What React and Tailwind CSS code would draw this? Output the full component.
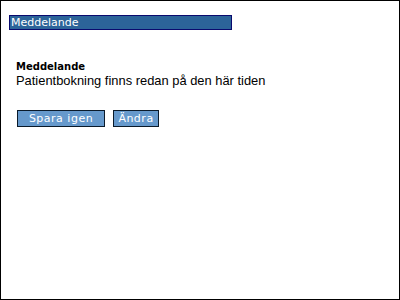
import React from 'react';

const Button = ({ children, className }) => (
  <button
    className={`h-[17px] border border-[#0a1a2a] bg-[#6699cc] text-white text-[11px] leading-none tracking-[0.5px] font-['DejaVu_Sans',sans-serif] ${className}`}
  >
    {children}
  </button>
);

export default function App() {
  return (
    <div className="w-[400px] h-[300px] border border-black bg-white box-border pt-[14px] pl-[8px]">
      <div className="w-[223px] h-[15px] bg-[#2c6499] border border-[#0a0a6e] flex items-center pl-[1px]">
        <span className="text-white text-[11px] leading-none font-['DejaVu_Sans',sans-serif]">Meddelande</span>
      </div>

      <div className="pl-[7px] pt-[32px]">
        <div className="text-[10px] leading-none font-bold text-black font-['DejaVu_Sans',sans-serif]">Meddelande</div>
        <div className="mt-[1px] text-[12.9px] leading-[15px] text-black font-['Liberation_Sans',sans-serif]">
          Patientbokning finns redan på den här tiden
        </div>

        <div className="flex gap-[8px] mt-[22px] ml-[1px]">
          <Button className="w-[88px]">Spara igen</Button>
          <Button className="w-[46px]">Ändra</Button>
        </div>
      </div>
    </div>
  );
}
